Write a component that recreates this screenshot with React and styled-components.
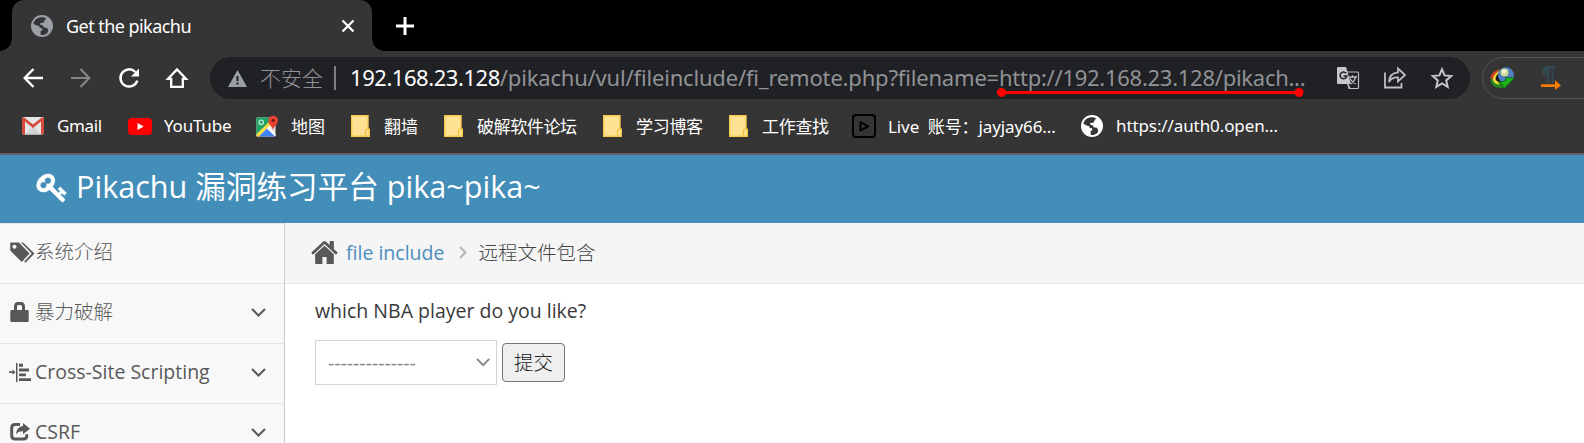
import React from 'react';
import styled, { createGlobalStyle } from 'styled-components';

const ui = '"Noto Sans", "Noto Sans CJK SC", sans-serif';
const site = '"Open Sans", "Noto Sans CJK SC", sans-serif';

const GlobalStyle = createGlobalStyle`
  *, *::before, *::after { box-sizing: border-box; }
  body { margin: 0; background: #fff; overflow: hidden; }
`;

const Window = styled.div`
  width: 1584px;
  height: 443px;
  display: flex;
  flex-direction: column;
  overflow: hidden;
`;

const Svg = styled.svg`
  display: block;
  flex: none;
  overflow: visible;
`;

const Label = styled.span`
  display: inline-block;
  white-space: pre;
  letter-spacing: ${(p) => p.$track || 0}px;
`;

/* ---------- browser chrome ---------- */

const TabStrip = styled.div`
  height: 51px;
  flex: none;
  display: flex;
  align-items: center;
  background: #000;
`;

const Tab = styled.div`
  position: relative;
  width: 360px;
  height: 51px;
  margin-left: 12px;
  padding: 0 17px 0 19px;
  display: flex;
  align-items: center;
  border-radius: 12px 12px 0 0;
  background: #353535;
  color: #fff;
  font: 18px ${ui};

  &::before, &::after {
    content: '';
    position: absolute;
    bottom: 0;
    width: 12px;
    height: 12px;
  }
  &::before {
    left: -12px;
    background: radial-gradient(circle at 0 0, #000 11.5px, #353535 12px);
  }
  &::after {
    right: -12px;
    background: radial-gradient(circle at 100% 0, #000 11.5px, #353535 12px);
  }
`;

const TabTitle = styled(Label)`
  flex: 1;
  margin-left: 13px;
`;

const NewTab = styled.div`
  margin-left: 24px;
`;

const Toolbar = styled.div`
  height: 54px;
  flex: none;
  display: flex;
  align-items: center;
  padding-left: 9px;
  background: #353535;
`;

const NavButton = styled.div`
  width: 48px;
  flex: none;
  height: 42px;
  display: flex;
  align-items: center;
  justify-content: center;
`;

const AddressBar = styled.div`
  position: relative;
  width: 1260px;
  flex: none;
  height: 42px;
  margin-left: 9px;
  padding: 0 17px 0 18px;
  display: flex;
  align-items: center;
  border-radius: 21px;
  background: #202124;
  color: #909296;
  font: 22px ${ui};
`;

const Insecure = styled.span`
  width: 73px;
  margin-left: 13px;
  margin-right: 1px;
  font-size: 21px;
  font-weight: 300;
  line-height: 40px;
`;

const Divider = styled.span`
  width: 2px;
  height: 24px;
  background: #7d7f82;
`;

const Url = styled.span`
  flex: 1;
  margin-left: 14px;
  padding-bottom: 2px;
  white-space: nowrap;
  line-height: 40px;
  b { color: #fff; font-weight: 400; }
`;

const AddressActions = styled.div`
  display: flex;
  align-items: center;
  gap: 24px;
`;

const Marker = styled(Svg)`
  position: absolute;
  left: 786px;
  top: 30px;
`;

const Extensions = styled.div`
  width: 130px;
  flex: none;
  height: 42px;
  margin-left: 12px;
  padding-left: 7px;
  display: flex;
  align-items: center;
  gap: 26px;
  border: 1px solid #545454;
  border-radius: 21px;
`;

const BookmarkBar = styled.div`
  height: 50px;
  flex: none;
  display: flex;
  align-items: center;
  padding: 0 0 6px 21px;
  border-bottom: 2px solid #636363;
  background: #353535;
  color: #fff;
  font: 17px ${ui};
`;

const Bookmark = styled.div`
  width: ${(p) => p.$w}px;
  flex: none;
  display: flex;
  align-items: center;
  gap: 12px;
`;

const BookmarkLabel = styled(Label)`
  padding-bottom: 2px;
`;

const IconSlot = styled.span`
  width: 24px;
  height: 24px;
  display: flex;
  align-items: center;
  justify-content: center;
`;

/* ---------- page ---------- */

const SiteHeader = styled.header`
  height: 68px;
  flex: none;
  display: flex;
  align-items: center;
  padding: 0 0 3px 39px;
  gap: 9px;
  background: #438eb9;
  color: #fff;
  font: 30.6px/40px ${site};
`;

const Brand = styled(Label)`
  padding-bottom: 3px;
`;

const Page = styled.div`
  flex: 1;
  min-height: 0;
  display: flex;
  color: #393939;
  font: 19.5px ${site};
`;

const Sidebar = styled.nav`
  width: 285px;
  flex: none;
  overflow: hidden;
  border-right: 1px solid #ccc;
  background: #f8f8f8;
`;

const MenuItem = styled.div`
  height: 60px;
  display: flex;
  align-items: center;
  padding: 0 18px 3px 9px;
  border-top: 1px solid #e5e5e5;
  color: #585858;
  line-height: 24px;
`;

const MenuIcon = styled.span`
  width: 26px;
  flex: none;
`;

const MenuLabel = styled(Label)`
  flex: 1;
  font-weight: ${(p) => (p.$light ? 300 : 400)};
`;

const Main = styled.main`
  flex: 1;
  background: #fff;
`;

const Breadcrumb = styled.div`
  height: 61px;
  display: flex;
  align-items: center;
  padding: 0 0 1px 26px;
  border-bottom: 1px solid #e5e5e5;
  background: #f5f5f5;
  color: #555;
`;

const Crumb = styled(Label)`
  margin-left: ${(p) => p.$gap}px;
  padding-bottom: ${(p) => (p.$light ? 2 : 0)}px;
  color: ${(p) => (p.$link ? '#4c8fbd' : '#444')};
  font-weight: ${(p) => (p.$light ? 300 : 400)};
`;

const Question = styled.p`
  margin: 12px 0 0 30px;
  line-height: 30px;
`;

const Form = styled.div`
  margin: 14px 0 0 30px;
  display: flex;
  align-items: center;
  gap: 5px;
`;

const Select = styled.div`
  width: 182px;
  height: 45px;
  padding: 0 6px 0 12px;
  display: flex;
  align-items: center;
  justify-content: space-between;
  border: 1px solid #d5d5d5;
  color: #858585;
`;

const Submit = styled.button`
  width: 63px;
  height: 39px;
  padding: 0;
  border: 1px solid #767676;
  border-radius: 4px;
  background: #efefef;
  color: #222;
  font: 300 19.5px/34px ${site};
`;

/* ---------- icons ---------- */

const Globe = ({ color, land }) => (
  <Svg width="22" height="22" viewBox="0 0 22 22">
    <circle cx="11" cy="11" r="11" fill={color} />
    <path
      d="M9.5 2.3C6 2.8 3.2 5.300 2.3 8.700L6.200 10.800 8.300 11 8.600 13 11 13.200 11.400 15 9.600 16.300 9.600 19.800C12 20.200 14.500 19.500 16.500 17.900L17.300 15.300 15.900 12.700 12.400 12.300 12.200 10.600 9.200 9.800 9.300 7.900 12.800 7.500 13.600 5.200 15.200 3.300C13.500 2.300 11.500 2 9.500 2.300Z"
      fill={land}
    />
  </Svg>
);

const Folder = () => (
  <Svg width="19" height="22" viewBox="0 0 19 22">
    <path d="M.7.7H17v13.600h1.300v7H.7Z" fill="#ffe293" stroke="#f7cb4d" strokeWidth="1.400" />
    <path d="M14.500 21v-5.500q0-1.300 1.500-1.300h2" fill="none" stroke="#f0c040" strokeWidth="1.300" />
  </Svg>
);

const Gmail = () => (
  <Svg width="22" height="18" viewBox="0 0 22 18">
    <rect width="22" height="17.500" rx="1.800" fill="#e6e6e6" />
    <path d="M3 17.500 11 9l8 8.500Z" fill="#d2d2d2" />
    <path d="M0 2.200Q0 .3 2 .3L11 7.500 20 .3q2 0 2 1.900v13.500q0 1.800-1.800 1.800H19V4.600l-8 6.400-8-6.400v12.900H1.800Q0 17.500 0 15.700Z" fill="#d54b3d" />
  </Svg>
);

const YouTube = () => (
  <Svg width="24" height="17" viewBox="0 0 24 17">
    <rect width="24" height="17" rx="4" fill="#f00" />
    <path d="M9.500 5v7l6.200-3.500Z" fill="#fff" />
  </Svg>
);

const MapsIcon = () => (
  <Svg width="22" height="22" viewBox="0 0 22 22">
    <rect x="0.500" y="2.500" width="19" height="19" rx="1" fill="#e8e8e8" />
    <path d="M.5 3.500q0-1 1-1H13l1 6L.5 20Z" fill="#1fa463" />
    <path d="M.5 19 13 7l2 3.500L3 21.500H.5Z" fill="#fddc4b" />
    <path d="M3 21.500 11 13.500l8 8Z" fill="#4285f4" />
    <path d="m11 13.500 2.300-2.500 6.200 8.500v2Z" fill="#fff" />
    <circle cx="5.200" cy="7.200" r="2.200" fill="none" stroke="#d7efe2" strokeWidth="1.200" />
    <path d="M17 15.500c-.4-4.500-4.700-5.500-4.700-10a4.800 4.800 0 0 1 9.600 0c0 4.500-4.500 5.500-4.900 10Z" fill="#ea4335" />
    <circle cx="17.100" cy="5.400" r="1.700" fill="#7c1a12" />
  </Svg>
);

const LiveIcon = () => (
  <Svg width="24" height="24" viewBox="0 0 24 24" fill="none" stroke="#000" strokeWidth="2" strokeLinejoin="round">
    <rect x="1" y="1" width="22" height="22" rx="3" />
    <path d="M8.500 8v8.500l7.500-4.200Z" />
  </Svg>
);

const Caret = ({ color = '#585858', s = 1 }) => (
  <Svg width={15 * s} height={9 * s} viewBox="0 0 15 9">
    <path d="m1 1 6.500 6.500L14 1" fill="none" stroke={color} strokeWidth="2" />
  </Svg>
);

const BookmarkIcon = { gmail: Gmail, youtube: YouTube, maps: MapsIcon, folder: Folder, live: LiveIcon, globe: Globe };

const bookmarks = [
  { icon: 'gmail', text: 'Gmail', w: 107, track: -0.35 },
  { icon: 'youtube', text: 'YouTube', w: 127, track: -0.2 },
  { icon: 'maps', text: '地图', w: 93 },
  { icon: 'folder', text: '翻墙', w: 93 },
  { icon: 'folder', text: '破解软件论坛', w: 159, track: -0.4 },
  { icon: 'folder', text: '学习博客', w: 126, track: -0.3 },
  { icon: 'folder', text: '工作查找', w: 126, track: -0.3 },
  { icon: 'live', text: 'Live  账号：jayjay66...', w: 228, track: -0.1 },
  { icon: 'globe', text: 'https://auth0.open...', w: 210, track: -0.1 },
];

const TagsGlyph = () => (
  <Svg width="26" height="21" viewBox="0 0 26 21" fill="#585858">
    <path d="M2.200.5H10L20.500 11.500 12.800 20 1.200 8.600V1.500Q1.200.5 2.200.5ZM5.500 2.800a2 2 0 1 0 .01 0Z" fillRule="evenodd" />
    <path d="M12 .5h2L25.500 11.500 16.500 20.800l-1.300-1.400 7.600-7.900Z" />
  </Svg>
);

const LockGlyph = () => (
  <Svg width="22" height="20" viewBox="0 0 22 20" fill="#585858">
    <path d="M2.500 8H5V5Q5 0 9 0h3q4 0 4 5v3h2.500q1.200 0 1.200 1.200v9.600q0 1.200-1.200 1.200h-16q-1.200 0-1.200-1.200V9.200Q1.300 8 2.500 8ZM8 8h5V4.500Q13 3 11.500 3h-2Q8 3 8 4.500Z" fillRule="evenodd" />
  </Svg>
);

const IndentGlyph = () => (
  <Svg width="22" height="19" viewBox="0 0 22 19" fill="#585858">
    <path d="M0 8.300h3.500V6.600l3 2.600-3 2.600v-1.700H0ZM7 0h1.500v19H7ZM10 .8h4v2.900h-4ZM10 5.600h10v2.900H10ZM10 10.400h7v2.900h-7ZM10 15.200h12v2.900H10Z" />
  </Svg>
);

const ShareGlyph = () => (
  <Svg width="22" height="20" viewBox="0 0 22 20">
    <path d="M11 2.500H6Q2.700 2.500 2.700 5.800v7.900Q2.700 17 6 17h8.500q3.300 0 3.300-3.300v-1.500" fill="none" stroke="#585858" strokeWidth="3" />
    <path d="M14 1l7 5.700-7 5.500V9.200q-4.500-.2-7 3Q7.500 4.800 14 4Z" fill="#585858" />
  </Svg>
);

const menu = [
  { text: '系统介绍', Icon: TagsGlyph, light: true },
  { text: '暴力破解', Icon: LockGlyph, light: true, more: true },
  { text: 'Cross-Site Scripting', Icon: IndentGlyph, more: true },
  { text: 'CSRF', Icon: ShareGlyph, more: true },
];

export default function App() {
  return (
    <Window>
      <GlobalStyle />
      <TabStrip>
        <Tab>
          <Globe color="#9aa0a6" land="#353535" />
          <TabTitle $track={-0.55}>Get the pikachu</TabTitle>
          <Svg width="14" height="14" viewBox="0 0 14 14" stroke="#fff" strokeWidth="2.300">
            <path d="m1.500 1.500 11 11m0-11-11 11" />
          </Svg>
        </Tab>
        <NewTab>
          <Svg width="18" height="18" viewBox="0 0 18 18" stroke="#fff" strokeWidth="3">
            <path d="M9 0v18M0 9h18" />
          </Svg>
        </NewTab>
      </TabStrip>

      <Toolbar>
        <NavButton>
          <Svg width="20" height="20" viewBox="0 0 20 20" fill="none" stroke="#fff" strokeWidth="2.400">
            <path d="M20 10H2M10.500 1 1.700 10l8.800 9" />
          </Svg>
        </NavButton>
        <NavButton>
          <Svg width="20" height="20" viewBox="0 0 20 20" fill="none" stroke="#858585" strokeWidth="2.200">
            <path d="M0 10h18M9.500 1l8.800 9-8.800 9" />
          </Svg>
        </NavButton>
        <NavButton>
          <Svg width="20" height="20" viewBox="0 0 20 20">
            <path d="M18.300 12.600A8.600 8.600 0 1 1 16.300 4" fill="none" stroke="#fff" strokeWidth="2.500" />
            <path d="M20 .5V8.500h-8Z" fill="#fff" />
          </Svg>
        </NavButton>
        <NavButton>
          <Svg width="20" height="20" viewBox="0 0 20 20" fill="none" stroke="#fff" strokeWidth="2.300">
            <path d="M1 10.800h3.200v8h11.600v-8H19L10 1.500Z" />
          </Svg>
        </NavButton>
        <AddressBar>
          <Svg width="19" height="17" viewBox="0 0 19 17">
            <path d="M9.500 0 19 17H0Z" fill="#9aa0a6" />
            <path d="M8.500 6h2v5h-2Zm0 6.500h2v2h-2Z" fill="#202124" />
          </Svg>
          <Insecure>不安全</Insecure>
          <Divider />
          <Url>
            <Label $track={-0.45}><b>192.168.23.128</b></Label>
            <Label $track={-0.18}>/pikachu/vul/fileinclude/fi_remote.php?filename=</Label>
            <Label $track={-0.27}>http://192.168.23.128/pikach...</Label>
          </Url>
          <AddressActions>
            <Svg width="22" height="22" viewBox="0 0 22 22">
              <path d="M8 5h12.500q1 0 1 1v14.500q0 1-1 1H12Z" fill="none" stroke="#bcbec1" strokeWidth="1.200" />
              <path d="M1 0h8l5 17H1q-1 0-1-1V1q0-1 1-1Z" fill="#c6c7c9" />
              <path d="M9.200 6.300A3.400 3.400 0 1 0 9.800 9H6.500" fill="none" stroke="#202124" strokeWidth="1.500" />
              <path d="M12 10h8M15.500 8.300V10M18.500 10q-1 4.500-5 7M13 11.500q2 4 5.500 5.500M11 17.500l2 4" fill="none" stroke="#bcbec1" strokeWidth="1.300" />
            </Svg>
            <Svg width="24" height="22" viewBox="0 0 24 22" fill="none" stroke="#bcbec1" strokeWidth="1.800">
              <path d="M2 5.500V20.500h16.500V16" />
              <path d="M15 1.500l7 6.500-7 6.500v-4q-6-.5-9 4.500Q6.500 6 15 5.300Z" />
            </Svg>
            <Svg width="22" height="22" viewBox="0 0 22 22" fill="none" stroke="#c6c7c9" strokeWidth="2">
              <path d="m11 2.300 2.600 6.100 6.600.6-5 4.400 1.500 6.500L11 16.500l-5.700 3.400 1.500-6.500-5-4.400 6.600-.6Z" />
            </Svg>
          </AddressActions>
          <Marker width="308" height="12" viewBox="0 0 308 12">
            <path d="M5 5.500h298" stroke="#f00" strokeWidth="3" />
            <circle cx="5.500" cy="5.500" r="4.500" fill="#f00" />
            <circle cx="303" cy="5.500" r="4.500" fill="#f00" />
          </Marker>
        </AddressBar>
        <Extensions>
          <Svg width="25" height="22" viewBox="0 0 25 22">
            <path d="M10 2.500C5 3 .5 7 .5 12q0 6 6 8.500l7.500.5V5Z" fill="#27891d" />
            <path d="M10 2.500C5 3 1 6.500.6 11l3 2Q5 6 10 2.500Z" fill="#d53d27" />
            <path d="M10 3.500C5.500 6 3 9 3 13q1 4 6 4.500l4-2Z" fill="#f0df3a" />
            <path d="M10 5Q5.500 8.500 5.500 12q1 3.500 6.500 3l1-5Z" fill="#16181a" />
            <circle cx="16" cy="8.200" r="8" fill="#4f7fc0" />
            <circle cx="14.500" cy="5.500" r="4" fill="#cddc9a" />
            <circle cx="14" cy="4.500" r="2" fill="#f4f6d8" />
            <path d="m15 10.500 9.500.5L13.500 22l-.8-4.500q-3 .5-4.500-2.500 4 .5 8-2Z" fill="#18b41a" stroke="#08550a" strokeWidth=".7" />
          </Svg>
          <Svg width="20" height="24" viewBox="0 0 20 24">
            <path d="M14 1H6a4.200 4.200 0 0 0 0 8.500h1V16H5.500M7.500 1v15M11.500 1v15M11 16h2" fill="none" stroke="#344852" strokeWidth="1.800" />
            <path d="M2.500 1.500h5V9H6Q1 8 2.500 1.500Z" fill="#344852" />
            <path d="M0 18.200h14v-4L20 19.500l-6 4.500v-3H0Z" fill="#f57c00" />
          </Svg>
        </Extensions>
      </Toolbar>

      <BookmarkBar>
        {bookmarks.map((b) => {
          const Icon = BookmarkIcon[b.icon];
          return (
            <Bookmark key={b.text} $w={b.w}>
              <IconSlot><Icon color="#fff" land="#353535" /></IconSlot>
              <BookmarkLabel $track={b.track}>{b.text}</BookmarkLabel>
            </Bookmark>
          );
        })}
      </BookmarkBar>

      <SiteHeader>
        <Svg width="28" height="28" viewBox="128 128 1600 1600" fill="#fff" stroke="#fff" strokeWidth="40">
          <path d="M832 512q0-80-56-136t-136-56-136 56-56 136q0 42 19 83-41-19-83-19-80 0-136 56t-56 136 56 136 136 56 136-56 56-136q0-42-19-83 41 19 83 19 80 0 136-56t56-136zm851 704q0 17-49 66t-66 49q-9 0-28.500-16t-36.500-33-38.500-40-24.500-26l-96 96 220 220q28 28 28 68 0 42-39 81t-81 39q-40 0-68-28l-671-671q-176 131-365 131-163 0-265.500-102.500t-102.500-265.500q0-160 95-313t248-248 313-95q163 0 265.500 102.500t102.500 265.500q0 189-131 365l355 355 96-96q-3-3-26-24.500t-40-38.500-33-36.500-16-28.500q0-17 49-66t66-49q13 0 23 10 6 6 46 44.500t82 79.500 86.500 86 73 78 28.500 41z" />
        </Svg>
        <Brand>Pikachu 漏洞练习平台 pika~pika~</Brand>
      </SiteHeader>

      <Page>
        <Sidebar>
          {menu.map(({ text, Icon, light, more }) => (
            <MenuItem key={text}>
              <MenuIcon><Icon /></MenuIcon>
              <MenuLabel $light={light}>{text}</MenuLabel>
              {more && <Caret />}
            </MenuItem>
          ))}
        </Sidebar>
        <Main>
          <Breadcrumb>
            <Svg width="27" height="23" viewBox="64 253 1664 1283" fill="#585858" preserveAspectRatio="none">
              <path d="M1472 992v480q0 26-19 45t-45 19h-384v-384h-256v384h-384q-26 0-45-19t-19-45v-480q0-1 .5-3t.5-3l575-474 575 474q1 2 1 6zm223-69l-62 74q-8 9-21 11h-3q-13 0-21-7l-692-577-692 577q-12 8-24 7-13-2-21-11l-62-74q-8-10-7-23.500t11-21.500l719-599q32-26 76-26t76 26l244 204v-195q0-14 9-23t23-9h192q14 0 23 9t9 23v408l219 182q10 8 11 21.500t-7 23.500z" />
            </Svg>
            <Crumb $gap={8} $link>file include</Crumb>
            <Crumb as={Svg} $gap={15} width="8" height="13" viewBox="0 0 8 13">
              <path d="m1 1 5.500 5.500L1 12" fill="none" stroke="#b2b6bf" strokeWidth="2" />
            </Crumb>
            <Crumb $gap={11} $light>远程文件包含</Crumb>
          </Breadcrumb>
          <Question>which NBA player do you like?</Question>
          <Form>
            <Select>
              <Label>--------------</Label>
              <Caret color="#858585" s={0.95} />
            </Select>
            <Submit>提交</Submit>
          </Form>
        </Main>
      </Page>
    </Window>
  );
}
